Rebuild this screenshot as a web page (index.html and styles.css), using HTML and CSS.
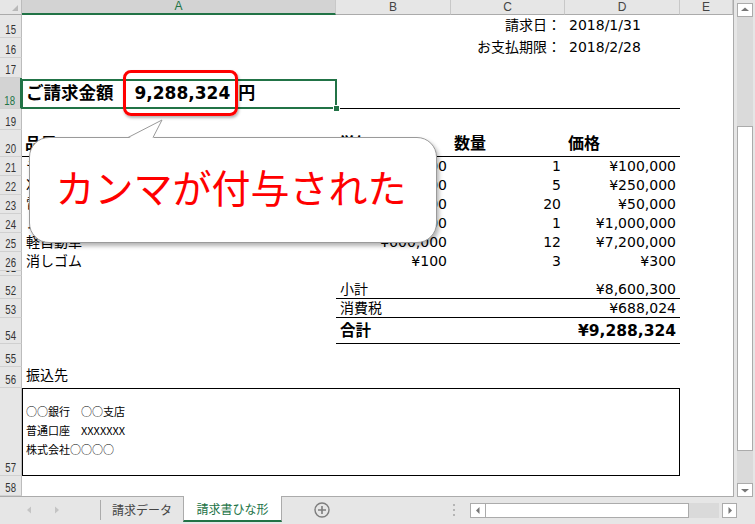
FILE: index.html
```html
<!DOCTYPE html>
<html lang="ja">
<head>
<meta charset="utf-8">
<title>請求書ひな形</title>
<link rel="stylesheet" href="styles.css">
</head>
<body>
<div class="app">
  <div class="main">
    <div class="sheet">
      <div class="row colhead">
        <div class="ch corner"><svg width="22" height="14" viewBox="0 0 22 14"><polygon points="18,5 18,11 12,11" fill="#b9b9b9"/></svg></div>
        <div class="ch sel">A</div>
        <div class="ch">B</div>
        <div class="ch">C</div>
        <div class="ch">D</div>
        <div class="ch">E</div>
      </div>

      <div class="row h23 top">
        <div class="rh"><span>15</span></div>
        <div class="c"></div><div class="c"></div>
        <div class="c r">請求日：</div>
        <div class="c">2018/1/31</div>
      </div>
      <div class="row h20 top">
        <div class="rh"><span>16</span></div>
        <div class="c"></div><div class="c"></div>
        <div class="c r">お支払期限：</div>
        <div class="c">2018/2/28</div>
      </div>
      <div class="row h20">
        <div class="rh"><span>17</span></div>
      </div>
      <div class="row h31">
        <div class="rh sel"><span>18</span></div>
        <div class="c amount"><span class="lbl">ご請求金額</span><span class="num">9,288,324</span><span class="unit">円</span></div>
        <div class="c bb"></div><div class="c bb"></div><div class="c bb"></div>
      </div>
      <div class="row h21">
        <div class="rh"><span>19</span></div>
      </div>
      <div class="row h27">
        <div class="rh"><span>20</span></div>
        <div class="c hd bb">品目</div>
        <div class="c hd bb">単価</div>
        <div class="c hd bb">数量</div>
        <div class="c hd bb">価格</div>
      </div>
      <div class="row h19">
        <div class="rh"><span>21</span></div>
        <div class="c">テレビ</div><div class="c r">¥100,000</div><div class="c r">1</div><div class="c r">¥100,000</div>
      </div>
      <div class="row h19">
        <div class="rh"><span>22</span></div>
        <div class="c">冷蔵庫</div><div class="c r">¥50,000</div><div class="c r">5</div><div class="c r">¥250,000</div>
      </div>
      <div class="row h19">
        <div class="rh"><span>23</span></div>
        <div class="c">電子辞書</div><div class="c r">¥2,500</div><div class="c r">20</div><div class="c r">¥50,000</div>
      </div>
      <div class="row h19">
        <div class="rh"><span>24</span></div>
        <div class="c">ノートパソコン</div><div class="c r">¥1,000,000</div><div class="c r">1</div><div class="c r">¥1,000,000</div>
      </div>
      <div class="row h19">
        <div class="rh"><span>25</span></div>
        <div class="c">軽自動車</div><div class="c r">¥600,000</div><div class="c r">12</div><div class="c r">¥7,200,000</div>
      </div>
      <div class="row h19">
        <div class="rh"><span>26</span></div>
        <div class="c">消しゴム</div><div class="c r">¥100</div><div class="c r">3</div><div class="c r">¥300</div>
      </div>
      <div class="row h5">
        <div class="rh"><span>51</span></div>
      </div>
      <div class="row h23">
        <div class="rh"><span>52</span></div>
        <div class="c"></div>
        <div class="c bb sum">小計</div><div class="c bb"></div><div class="c r bb sum">¥8,600,300</div>
      </div>
      <div class="row h19 low">
        <div class="rh"><span>53</span></div>
        <div class="c"></div>
        <div class="c bb">消費税</div><div class="c bb"></div><div class="c r bb">¥688,024</div>
      </div>
      <div class="row h26 low">
        <div class="rh"><span>54</span></div>
        <div class="c"></div>
        <div class="c bb total">合計</div><div class="c bb"></div><div class="c r bb total">¥9,288,324</div>
      </div>
      <div class="row h23">
        <div class="rh"><span>55</span></div>
      </div>
      <div class="row h21">
        <div class="rh"><span>56</span></div>
        <div class="c up">振込先</div>
      </div>
      <div class="row h88">
        <div class="rh"><span>57</span></div>
        <div class="c box">
          <div>○○銀行　○○支店</div>
          <div>普通口座　XXXXXXX</div>
          <div>株式会社○○○○</div>
        </div>
      </div>
      <div class="row h20">
        <div class="rh"><span>58</span></div>
      </div>

      <div class="selbox"></div>
      <div class="handle"></div>
      <div class="redbox"></div>
      <div class="bubble">カンマが付与された</div>
      <svg class="tail" width="40" height="22" viewBox="0 0 40 22">
        <polygon points="2,19.5 36,1 27,19.5" fill="#fff"/>
        <polyline points="2,18.5 36,1 27,18.5" fill="none" stroke="#9a9a9a" stroke-width="1"/>
      </svg>
    </div>

    <div class="vscroll">
      <div class="sbtn"><svg width="14" height="12" viewBox="0 0 14 12"><polygon points="3,7 7,3.5 11,7" fill="#777"/></svg></div>
      <div class="vtrack"><div class="vthumb"></div></div>
      <div class="sbtn"><svg width="14" height="12" viewBox="0 0 14 12"><polygon points="3,5 11,5 7,8.5" fill="#777"/></svg></div>
    </div>
  </div>

  <div class="tabbar">
    <div class="nav">
      <svg width="8" height="10" viewBox="0 0 8 10"><polygon points="6,1.5 2,5 6,8.5" fill="#c4c4c4"/></svg>
      <svg width="8" height="10" viewBox="0 0 8 10"><polygon points="2,1.5 6,5 2,8.5" fill="#c4c4c4"/></svg>
    </div>
    <div class="tsep"></div>
    <div class="tab">請求データ</div>
    <div class="tab active">請求書ひな形</div>
    <div class="add"><svg width="18" height="18" viewBox="0 0 18 18"><circle cx="9" cy="9" r="7" fill="none" stroke="#7d7d7d" stroke-width="1.4"/><path d="M9 5v8M5 9h8" stroke="#7d7d7d" stroke-width="1.6"/></svg></div>
    <div class="dots"><i></i><i></i><i></i></div>
    <div class="hscroll">
      <div class="hbtn"><svg width="12" height="13" viewBox="0 0 12 13"><polygon points="7.5,3 4,6.5 7.5,10" fill="#777"/></svg></div>
      <div class="hthumb"></div>
      <div class="htrack"></div>
      <div class="hbtn right"><svg width="12" height="13" viewBox="0 0 12 13"><polygon points="4.5,3 8,6.5 4.5,10" fill="#777"/></svg></div>
    </div>
  </div>
</div>
</body>
</html>
```

FILE: styles.css
```css
* {
  box-sizing: border-box;
  margin: 0;
  padding: 0;
}

body {
  margin: 0;
  width: 755px;
  height: 524px;
  overflow: hidden;
  background: #e6e6e6;
  font-family: "DejaVu Sans", "Noto Sans CJK JP", sans-serif;
}

.app {
  display: flex;
  flex-direction: column;
  width: 755px;
  height: 524px;
}

.main {
  display: flex;
  height: 497px;
}

.sheet {
  position: relative;
  width: 734px;
  height: 497px;
  background: #fff;
  border-right: 1px solid #ababab;
  border-bottom: 1px solid #ababab;
  overflow: hidden;
}

.row {
  display: grid;
  grid-template-columns: 22px 314px 115px 114px 115px 53px;
  grid-template-rows: minmax(0, 1fr);
}

.colhead { height: 15px; }
.h5 { height: 5px; }
.h19 { height: 19px; }
.h20 { height: 20px; }
.h21 { height: 21px; }
.h23 { height: 23px; }
.h26 { height: 26px; }
.h27 { height: 27px; }
.h31 { height: 31px; }
.h88 { height: 88px; }

.ch {
  background: #e6e6e6;
  border-right: 1px solid #c8c8c8;
  border-bottom: 1px solid #ababab;
  font-family: "Liberation Sans", sans-serif;
  font-size: 12px;
  line-height: 14px;
  color: #444;
  text-align: center;
}

.ch.corner {
  border-right: 1px solid #bcbcbc;
}

.ch.corner svg {
  display: block;
}

.ch.sel {
  background: #d3d3d3;
  color: #217346;
  border-bottom: 2px solid #217346;
  line-height: 13px;
}

.rh {
  background: #e6e6e6;
  border-right: 1px solid #bcbcbc;
  border-bottom: 1px solid #d0d0d0;
  display: flex;
  align-items: flex-end;
  justify-content: center;
  overflow: hidden;
  font-family: "Liberation Sans", sans-serif;
  font-size: 12px;
  line-height: 13px;
  color: #333;
}

.rh span {
  display: inline-block;
  transform: scaleX(0.8);
}

.rh.sel {
  background: #d3d3d3;
  color: #217346;
  border-right: 2px solid #217346;
}

.c {
  display: flex;
  align-items: center;
  padding: 0 4px 2px;
  white-space: nowrap;
  font-size: 14px;
  line-height: 14px;
  color: #000;
  min-width: 0;
  min-height: 0;
}

.c.r {
  justify-content: flex-end;
}

.top .c {
  padding-bottom: 3px;
}

.low .c {
  padding-bottom: 0;
}

.bb {
  border-bottom: 1px solid #000;
}

.amount {
  font-size: 17px;
  line-height: 17px;
  font-weight: bold;
  padding-bottom: 1px;
}

.amount .lbl {
  font-size: 17.5px;
}

.amount .num {
  margin-left: 21px;
}

.amount .unit {
  margin-left: 8px;
}

.hd {
  font-size: 16px;
  line-height: 16px;
  font-weight: bold;
  padding: 2px 4px 0 3px;
}

.sum {
  padding: 4px 4px 0;
}

.total {
  font-size: 15.5px;
  line-height: 16px;
  font-weight: bold;
}

.up {
  padding-bottom: 5px;
}

.box {
  grid-column: 2 / 6;
  flex-direction: column;
  align-items: flex-start;
  justify-content: center;
  border: 1px solid #000;
  padding: 0 0 4px 3px;
  font-family: "Noto Sans CJK JP", sans-serif;
  font-size: 11px;
  line-height: 19px;
}

.selbox {
  position: absolute;
  left: 21px;
  top: 79px;
  width: 316px;
  height: 30px;
  border: 2px solid #217346;
}

.handle {
  position: absolute;
  left: 333px;
  top: 105px;
  width: 7px;
  height: 7px;
  background: #217346;
  border: 1px solid #fff;
}

.redbox {
  position: absolute;
  left: 123px;
  top: 70px;
  width: 115px;
  height: 46px;
  border: 3.5px solid #ff0000;
  border-radius: 8px;
  box-shadow: 1px 2px 3px rgba(0, 0, 0, 0.3);
}

.bubble {
  position: absolute;
  left: 29px;
  top: 137px;
  width: 408px;
  height: 106px;
  background: #fff;
  border: 1px solid #9a9a9a;
  border-radius: 20px;
  box-shadow: 2px 3px 4px rgba(0, 0, 0, 0.3);
  display: flex;
  align-items: center;
  justify-content: center;
  font-family: "Noto Sans CJK JP", sans-serif;
  font-size: 39px;
  line-height: 1;
  color: #ff0000;
  padding-bottom: 7px;
  padding-right: 4px;
}

.tail {
  position: absolute;
  left: 126px;
  top: 119px;
}

.vscroll {
  width: 21px;
  display: flex;
  flex-direction: column;
  padding: 3px 0 0 3px;
  background: #e6e6e6;
}

.sbtn {
  width: 16px;
  height: 14px;
  background: #fff;
  border: 1px solid #ababab;
  display: flex;
  align-items: center;
  justify-content: center;
}

.vtrack {
  flex: 1;
  width: 16px;
  background: #dadada;
  padding-top: 109px;
}

.vthumb {
  height: 325px;
  background: #fff;
  border: 1px solid #ababab;
}

.tabbar {
  height: 27px;
  display: flex;
  align-items: flex-start;
  background: #e6e6e6;
  font-family: "Noto Sans CJK JP", sans-serif;
  font-size: 12px;
}

.nav {
  width: 100px;
  height: 27px;
  display: flex;
  align-items: center;
  padding-left: 25px;
  gap: 20px;
  padding-bottom: 1px;
}

.nav svg {
  display: block;
}

.tsep {
  width: 1px;
  height: 20px;
  margin-top: 3px;
  background: #ababab;
}

.tab {
  width: 82px;
  height: 24px;
  display: flex;
  align-items: center;
  justify-content: center;
  color: #444;
}

.tab.active {
  position: relative;
  width: 99px;
  height: 26px;
  margin-top: -1px;
  background: #fff;
  border-left: 1px solid #ababab;
  border-right: 1px solid #ababab;
  border-bottom: 2px solid #217346;
  color: #217346;
  padding-top: 1px;
}

.add {
  width: 80px;
  height: 26px;
  display: flex;
  align-items: center;
  justify-content: center;
}

.add svg {
  display: block;
}

.dots {
  width: 108px;
  height: 27px;
  display: flex;
  flex-direction: column;
  align-items: flex-end;
  padding: 7px 15px 0 0;
  gap: 3px;
}

.dots i {
  display: block;
  width: 2px;
  height: 2px;
  background: #b5b5b5;
}

.hscroll {
  display: flex;
  margin-top: 6px;
  height: 15px;
}

.hbtn {
  width: 16px;
  height: 15px;
  background: #fff;
  border: 1px solid #ababab;
  display: flex;
  align-items: center;
  justify-content: center;
}

.hbtn.right {
  width: 15px;
  margin-left: 3px;
}

.hthumb {
  width: 204px;
  margin-left: -1px;
  background: #fff;
  border: 1px solid #ababab;
}

.htrack {
  width: 30px;
  background: #dadada;
}
```
